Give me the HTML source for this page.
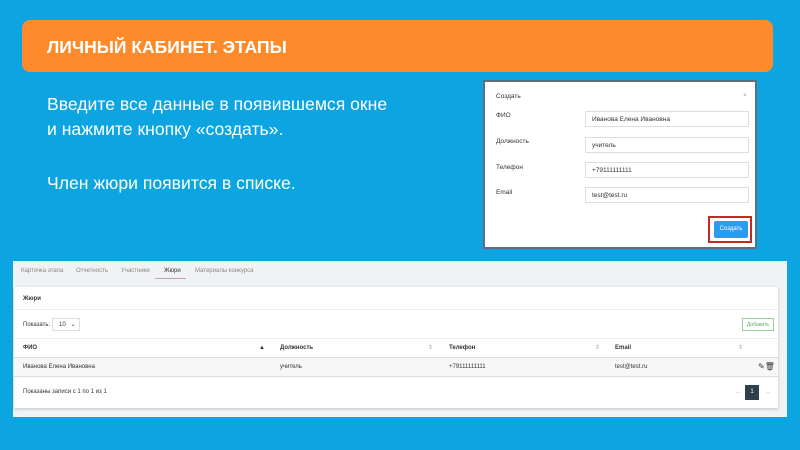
<!DOCTYPE html><html><head><meta charset="utf-8"><style>
body{margin:0;width:800px;height:450px;background:#0ca5e1;font-family:"Liberation Sans",sans-serif;position:relative;overflow:hidden}
.a{position:absolute}
.banner{left:22px;top:20px;width:751px;height:52px;background:#fd8b2c;border-radius:8px;color:#fff;font-weight:bold;font-size:17.5px;line-height:54px;padding-left:25px;box-sizing:border-box}
.txt{color:#fff;font-size:17.6px;line-height:25px;left:47px}
.dlg{left:483px;top:80px;width:274px;height:169px;background:#fff;border:2px solid #5f6e7c;box-sizing:border-box;font-size:6.5px;color:#333}
.inp{position:absolute;left:100px;width:164px;height:16px;border:1px solid #ddd;box-sizing:border-box;line-height:15px;padding-left:6px;font-size:6.5px}
.lab{position:absolute;left:11px}
.panel{left:13px;top:261px;width:774px;height:156px;background:#f1f2f4}
.card{left:14px;top:287px;width:764px;height:121px;background:#fff;box-shadow:0 1px 3px rgba(0,0,0,.2);font-size:6px;color:#333}
.tab{position:absolute;top:7px;font-size:6px;color:#888}
</style></head><body>
<div class="a banner">ЛИЧНЫЙ КАБИНЕТ. ЭТАПЫ</div>
<div class="a txt" style="top:92px">Введите все данные в появившемся окне<br>и нажмите кнопку «создать».</div>
<div class="a txt" style="top:171px">Член жюри появится в списке.</div>
<div class="a dlg">
<div class="lab" style="top:11px">Создать</div><div class="lab" style="left:258px;top:10px;color:#999">×</div>
<div class="lab" style="top:30px">ФИО</div><div class="inp" style="top:29px">Иванова Елена Ивановна</div>
<div class="lab" style="top:56px">Должность</div><div class="inp" style="top:55px">учитель</div>
<div class="lab" style="top:82px">Телефон</div><div class="inp" style="top:80px">+79111111111</div>
<div class="lab" style="top:107px">Email</div><div class="inp" style="top:105px">test@test.ru</div>
<div style="position:absolute;left:223px;top:134px;width:44px;height:27px;border:2px solid #c62828;box-sizing:border-box"></div>
<div style="position:absolute;left:229px;top:139px;width:34px;height:17px;background:#2d9bf0;color:#fff;text-align:center;line-height:17px;font-size:6px;border-radius:2px">Создать</div>
</div>
<div class="a panel">
<div class="tab" style="left:8px">Карточка этапа</div><div class="tab" style="left:63px">Отчетность</div><div class="tab" style="left:108px">Участники</div>
<div class="tab" style="left:151px;color:#333">Жюри</div><div style="position:absolute;left:142px;top:17px;width:31px;height:1px;background:#c9a0b0"></div>
<div class="tab" style="left:182px">Материалы конкурса</div>
</div>
<div class="a card">
<div class="a" style="left:9px;top:9px;font-weight:bold">Жюри</div>
<div class="a" style="left:0;top:22px;width:100%;height:1px;background:#eee"></div>
<div class="a" style="left:9px;top:35px">Показать:</div>
<div class="a" style="left:38px;top:31px;width:28px;height:13px;border:1px solid #ddd;box-sizing:border-box;line-height:12px;padding-left:6px">10 &nbsp;&nbsp;⌄</div>
<div class="a" style="left:728px;top:31px;width:32px;height:13px;border:1px solid #9c9;box-sizing:border-box;line-height:12px;text-align:center;color:#6a6;font-size:5px">Добавить</div>
<div class="a" style="left:0;top:51px;width:100%;height:1px;background:#eee"></div>
<div class="a" style="left:9px;top:58px;font-weight:bold">ФИО</div><div class="a" style="left:245px;top:58px">▲</div>
<div class="a" style="left:266px;top:58px;font-weight:bold">Должность</div><div class="a" style="left:414px;top:57px;color:#aaa">⇕</div>
<div class="a" style="left:435px;top:58px;font-weight:bold">Телефон</div><div class="a" style="left:581px;top:57px;color:#aaa">⇕</div>
<div class="a" style="left:601px;top:58px;font-weight:bold">Email</div><div class="a" style="left:724px;top:57px;color:#aaa">⇕</div>
<div class="a" style="left:0;top:70px;width:100%;height:1px;background:#ddd"></div>
<div class="a" style="left:0;top:71px;width:100%;height:18px;background:#f7f7f7"></div>
<div class="a" style="left:9px;top:77px">Иванова Елена Ивановна</div><div class="a" style="left:266px;top:77px">учитель</div>
<div class="a" style="left:435px;top:77px">+79111111111</div><div class="a" style="left:601px;top:77px">test@test.ru</div>
<div class="a" style="left:744px;top:75px;font-size:8px">✎🗑</div>
<div class="a" style="left:0;top:89px;width:100%;height:1px;background:#ddd"></div>
<div class="a" style="left:9px;top:102px">Показаны записи с 1 по 1 из 1</div>
<div class="a" style="left:721px;top:102px;color:#aaa">←</div>
<div class="a" style="left:731px;top:98px;width:14px;height:15px;background:#2f3f4c;color:#fff;text-align:center;line-height:15px">1</div>
<div class="a" style="left:751px;top:102px;color:#aaa">→</div>
</div>
</body></html>
